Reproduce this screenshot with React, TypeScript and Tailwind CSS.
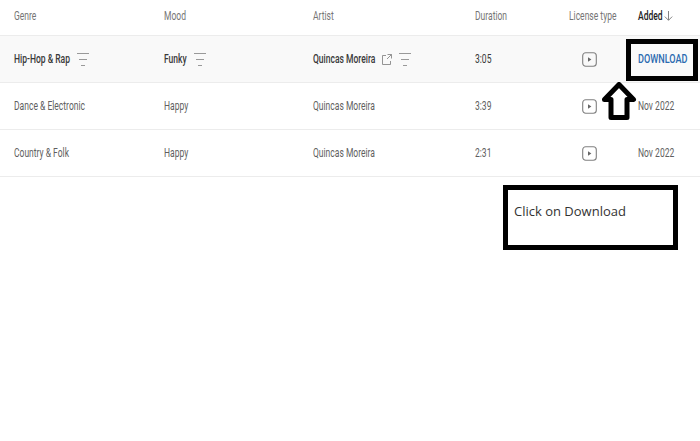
import type { ReactNode } from "react";

const rows = [
  { genre: "Hip-Hop & Rap", mood: "Funky", duration: "3:05", added: "", active: true },
  { genre: "Dance & Electronic", mood: "Happy", duration: "3:39", added: "Nov 2022", active: false },
  { genre: "Country & Folk", mood: "Happy", duration: "2:31", added: "Nov 2022", active: false },
];

const gridCols = "grid grid-cols-[149.5px_149.5px_162px_94px_69px_1fr] items-center pl-[14px] border-b border-[#ececec]";

function Label({ children, className = "" }: { children: ReactNode; className?: string }) {
  return (
    <span className={`inline-block origin-left -translate-y-px scale-x-[0.655] whitespace-nowrap text-[13px] leading-none ${className}`}>
      {children}
    </span>
  );
}

function FilterIcon() {
  return (
    <svg width="12" height="13" viewBox="0 0 12 13" fill="none" stroke="#999" strokeWidth="1">
      <path d="M0 .5h12M2 6.500h8M4 12.500h4" />
    </svg>
  );
}

function PlayBox() {
  return (
    <svg width="15" height="15" viewBox="0 0 15 15" className="ml-[13px]">
      <rect x="0.7" y="0.7" width="13.6" height="13.6" rx="3" fill="none" stroke="#808080" strokeWidth="1.1" />
      <path d="M6 5.2l3.4 2.3L6 9.8z" fill="#666" />
    </svg>
  );
}

function ExternalIcon() {
  return (
    <svg width="10" height="11" viewBox="0 0 10 11" fill="none" stroke="#888" strokeWidth="0.9">
      <path d="M4 1.500H.5v9h8V7M5.500.5h4v4M9.500.5L5 5" />
    </svg>
  );
}

export default function App() {
  return (
    <div className="relative h-[441px] w-[700px] overflow-hidden bg-white font-['Roboto',sans-serif]">
      <div className={`${gridCols} h-[36px] pb-[3px] text-[#757575]`}>
        <Label>Genre</Label>
        <Label>Mood</Label>
        <Label>Artist</Label>
        <Label>Duration</Label>
        <Label>License type</Label>
        <div className="flex items-center gap-[3px]">
          <Label className="w-[23px] font-medium text-[#222]">Added</Label>
          <svg width="9" height="10" viewBox="0 0 9 10" fill="none" stroke="#777" strokeWidth="0.9">
            <path d="M4.500 0v9.200M.8 5.600l3.700 3.700 3.700-3.700" />
          </svg>
        </div>
      </div>

      {rows.map((row) => (
        <div
          key={row.genre}
          className={`${gridCols} h-[47px] ${row.active ? "bg-[#f9f9f9] text-[#3a3a3a]" : "text-[#5f5f5f]"}`}
        >
          <div className="flex items-center">
            <Label className={row.active ? "w-[63px] font-medium" : ""}>{row.genre}</Label>
            {row.active && <FilterIcon />}
          </div>
          <div className="flex items-center">
            <Label className={row.active ? "w-[30px] font-medium" : ""}>{row.mood}</Label>
            {row.active && <FilterIcon />}
          </div>
          <div className="flex items-center">
            <Label className={row.active ? "w-[69px] font-medium" : ""}>Quincas Moreira</Label>
            {row.active && (
              <div className="flex items-center gap-[7px]">
                <ExternalIcon />
                <FilterIcon />
              </div>
            )}
          </div>
          <Label>{row.duration}</Label>
          <PlayBox />
          <div>
            {row.active ? (
              <span className="inline-block origin-left -translate-y-px scale-x-[0.7] whitespace-nowrap text-[13px] font-medium leading-none text-[#2a6ab0]">
                DOWNLOAD
              </span>
            ) : (
              <Label>{row.added}</Label>
            )}
          </div>
        </div>
      ))}

      <div className="absolute left-[626px] top-[39px] h-[42px] w-[72px] border-[5px] border-black" />

      <svg width="38" height="40" viewBox="0 0 38 40" className="absolute left-[600px] top-[82px]">
        <path d="M19 2.500L33.500 17.500H27V35.500H11V17.500H4.500Z" fill="white" stroke="black" strokeWidth="5" strokeLinejoin="round" />
      </svg>

      <div className="absolute left-[503px] top-[185px] h-[65px] w-[175px] border-[5px] border-black bg-white pl-[6px] pt-[12px] font-['Open_Sans',sans-serif] text-[13px] leading-[18px] text-[#333]">
        Click on Download
      </div>
    </div>
  );
}
